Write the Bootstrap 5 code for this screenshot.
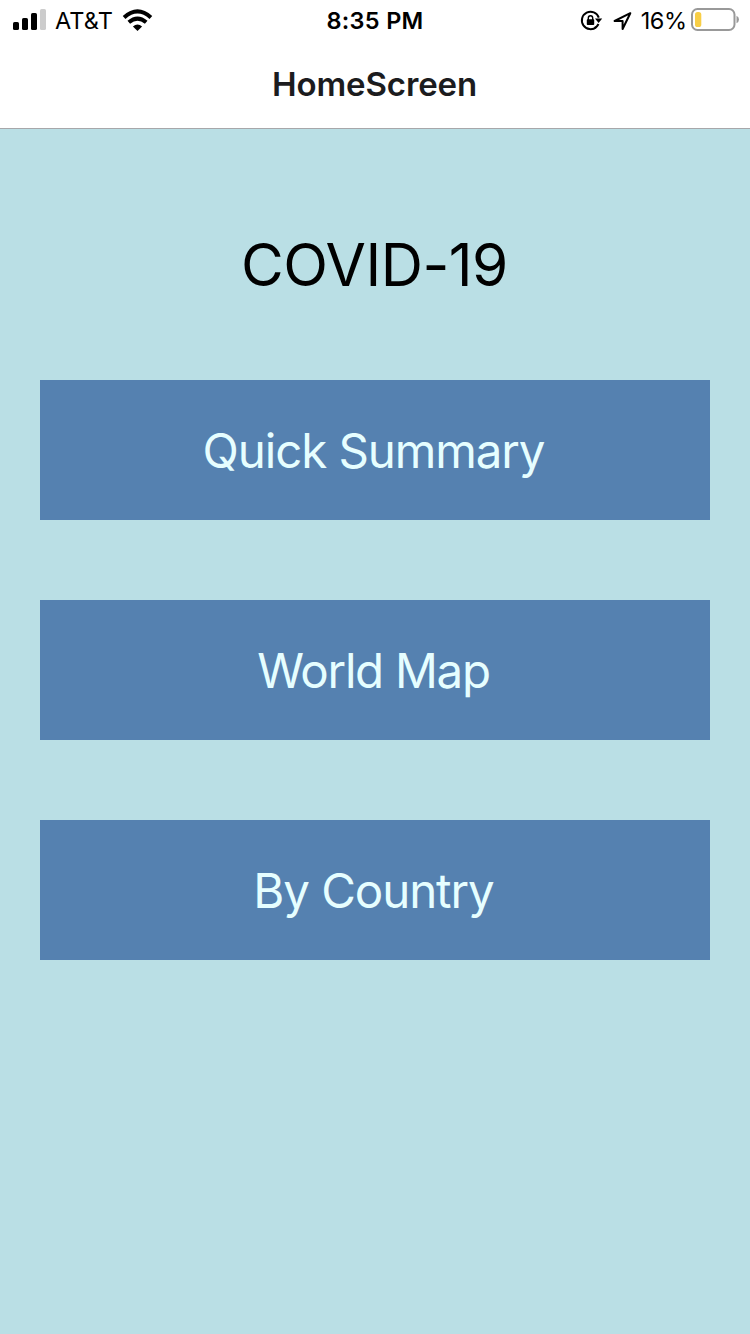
<!DOCTYPE html>
<html lang="en">
<head>
<meta charset="utf-8">
<meta name="viewport" content="width=device-width, initial-scale=1">
<title>HomeScreen</title>
<link href="https://cdn.jsdelivr.net/npm/bootstrap@5.3.0/dist/css/bootstrap.min.css" rel="stylesheet">
<style>
body{font-family:Inter,"Liberation Sans",sans-serif;background:#badfe5;color:#000}
.app-header{height:129px;background:#fff;border-bottom:1px solid #a7a7aa}
.status-bar{height:40px;font-size:23.5px;line-height:40px;padding-left:13px;padding-right:11px}
.status-side{flex:1 1 0}
.status-bar svg{display:block;flex:none}
.status-bar span,.clock{padding-top:1px}
.carrier{letter-spacing:.1px;margin-left:8px;margin-right:9.500px}
.clock{font-weight:600;font-size:23.5px;letter-spacing:.3px;padding-right:2px}
.percent{letter-spacing:-.5px;margin-left:7.500px;margin-right:4.500px}
.screen-title{height:88px;font-size:33px;font-weight:600;line-height:88px;color:#1c1c1e;letter-spacing:-.1px;padding-right:1px}
.headline{font-size:58.5px;font-weight:400;line-height:70px;margin-top:101px;margin-bottom:80px;letter-spacing:-.5px;padding-right:1px}
.menu-list{gap:80px;padding:0 40px}
.menu-btn{height:140px;font-size:47.5px;line-height:1;background:#5581b0;color:#e6feff;padding:2px 3px 0 0;--bs-btn-hover-bg:#47709d;--bs-btn-hover-color:#e6feff}
.t-summary{letter-spacing:-1.1px}
.t-map{letter-spacing:-1.3px}
.t-country{letter-spacing:-1.1px}
</style>
</head>
<body class="min-vh-100">
<header class="app-header">
  <div class="status-bar d-flex align-items-center">
    <div class="status-side d-flex align-items-center">
      <svg width="34" height="40" viewBox="0 0 34 40"><rect x="0" y="22" width="6" height="8" rx="1.6"/><rect x="9" y="18" width="6" height="12" rx="1.6"/><rect x="18" y="13" width="6" height="17" rx="1.6"/><rect x="27" y="9" width="6" height="21" rx="1.6" fill="#ccc"/></svg>
      <span class="carrier">AT&amp;T</span>
      <svg width="32" height="40" viewBox="122 0 32 40"><path d="M137.500 31L132.900 26.400Q137.500 22.600 142.100 26.400Z"/><path d="M128.800 22.300Q137.500 14.900 146.200 22.300" fill="none" stroke="#000" stroke-width="4"/><path d="M124.100 17.500Q137.500 5.300 150.900 17.500" fill="none" stroke="#000" stroke-width="4"/></svg>
    </div>
    <div class="clock">8:35 PM</div>
    <div class="status-side d-flex align-items-center justify-content-end">
      <svg width="54" height="40" viewBox="579 0 54 40"><path d="M596.400 26.900A8.700 8.700 0 1 1 598.800 17.600" fill="none" stroke="#000" stroke-width="2"/><path d="M594.700 28A8.700 8.700 0 0 0 598.500 24" fill="none" stroke="#000" stroke-width="2"/><path d="M595 18.400H602.200L598.600 22.900Z"/><rect x="586.800" y="19.200" width="7.400" height="5.800" rx=".8"/><path d="M588.300 20V18A2.200 2.200 0 0 1 592.700 18V20" fill="none" stroke="#000" stroke-width="1.400"/><path d="M630.300 13.200L614.600 21H622.600V29Z" fill="none" stroke="#000" stroke-width="2" stroke-linejoin="round"/></svg>
      <span class="percent">16%</span>
      <svg width="48" height="40" viewBox="691 0 48 40"><rect x="692" y="9" width="42.500" height="21" rx="5.500" fill="none" stroke="#999" stroke-width="2"/><rect x="695" y="12" width="6.300" height="15" rx="2.600" fill="#f8ce46"/><path d="M736.500 15.800Q739 17 739 19.500T736.500 23.200Z" fill="#999"/></svg>
    </div>
  </div>
  <div class="screen-title text-center">HomeScreen</div>
</header>
<main>
  <h1 class="headline text-center">COVID-19</h1>
  <nav class="menu-list d-flex flex-column" aria-label="Statistics">
    <button class="menu-btn btn rounded-0 border-0 w-100" type="button"><span class="t-summary">Quick Summary</span></button>
    <button class="menu-btn btn rounded-0 border-0 w-100" type="button"><span class="t-map">World Map</span></button>
    <button class="menu-btn btn rounded-0 border-0 w-100" type="button"><span class="t-country">By Country</span></button>
  </nav>
</main>
<script src="https://cdn.jsdelivr.net/npm/bootstrap@5.3.0/dist/js/bootstrap.bundle.min.js"></script>
</body>
</html>
